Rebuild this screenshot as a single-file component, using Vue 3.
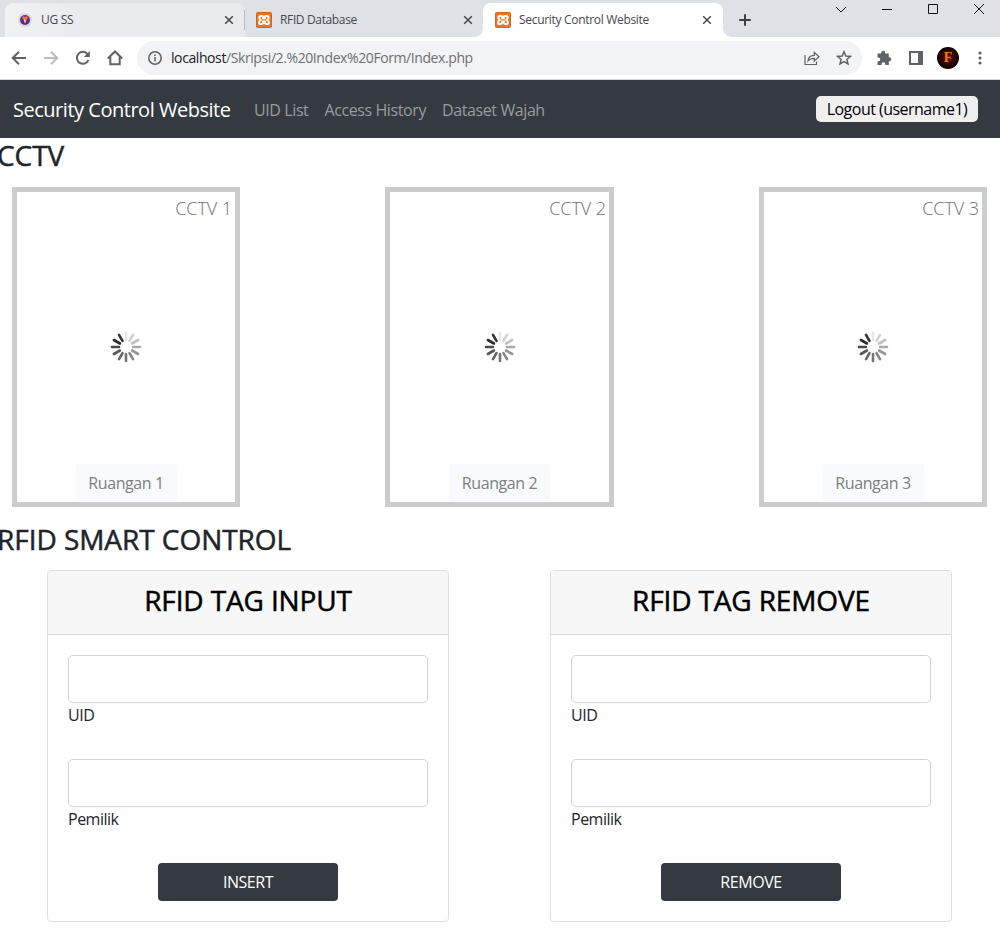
<script setup>
const tabs = [
  { title: 'UG SS', icon: 'seal', kind: 'first' },
  { title: 'RFID Database', icon: 'xampp', kind: 'second' },
  { title: 'Security Control Website', icon: 'xampp', kind: 'active' }
]
const links = ['UID List', 'Access History', 'Dataset Wajah']
const cameras = [1, 2, 3]
const shades = ['#e6e6e6', '#d2d2d2', '#c0c0c0', '#aaaaaa', '#969696', '#858585', '#757575', '#666666', '#585858', '#494949', '#2c2c2c', '#343434']
const forms = [
  { title: 'RFID TAG INPUT', action: 'INSERT' },
  { title: 'RFID TAG REMOVE', action: 'REMOVE' }
]
</script>

<template>
  <div class="window">
    <header class="strip">
      <div v-for="t in tabs" :key="t.title" class="tab" :class="t.kind">
        <svg v-if="t.icon === 'seal'" class="fav" viewBox="0 0 16 16">
          <circle cx="8" cy="8" r="6.6" fill="#dcd9e2" stroke="#cfccd6" stroke-dasharray="1 1" />
          <circle cx="8" cy="8" r="5" fill="#6b2a80" />
          <path d="M5 5.5 6.500 4 8 5 9.500 4 11 5.500 9.500 8h-3z" fill="#e5793a" />
          <path d="M7.200 7.500h1.600v3H7.200z" fill="#f3d9e0" />
          <path d="M4.500 9.500 7 11.500M11.500 9.500 9 11.500" stroke="#3b2a8c" />
        </svg>
        <svg v-else class="fav" viewBox="0 0 16 16">
          <rect x=".5" y=".5" width="15" height="15" rx="1" fill="#ee7422" stroke="#c96a2c" />
          <path d="M4.900 4H6C6.900 4 7.200 4.600 7.200 5.300V6.300H8.800V5.300C8.800 4.600 9.100 4 10 4H11.100C12.100 4 12.700 4.600 12.700 5.500 12.700 6.800 12 7.300 11.300 8 12.200 8.500 12.900 9.200 12.900 10.400 12.900 11.500 12.200 12 11.200 12H10.300C9.300 12 8.800 11.500 8.800 10.600V9.400H7.200V10.600C7.200 11.500 6.700 12 5.700 12H4.800C3.800 12 3.100 11.500 3.100 10.400 3.100 9.200 3.800 8.500 4.700 8 4 7.300 3.300 6.800 3.300 5.500 3.300 4.600 3.900 4 4.900 4Z" fill="none" stroke="#fff" stroke-width="2" />
        </svg>
        <span class="tab-title">{{ t.title }}</span>
        <svg class="close" viewBox="0 0 10 10"><path d="M1.200 1.200 8.800 8.800M8.800 1.200 1.200 8.800" /></svg>
      </div>
      <svg class="plus" viewBox="0 0 12 12"><path d="M6 .2V11.800M.2 6H11.800" /></svg>
      <div class="controls">
        <svg viewBox="0 0 12 12"><path d="M1 4 6 9 11 4" /></svg>
        <svg viewBox="0 0 12 12"><path d="M1 6.500H11" /></svg>
        <svg viewBox="0 0 12 12"><path d="M1.500 1.500H10.500V10.500H1.500Z" /></svg>
        <svg viewBox="0 0 12 12"><path d="M1 1 11 11M11 1 1 11" /></svg>
      </div>
    </header>

    <div class="toolbar">
      <svg class="ic back" viewBox="0 0 16 16"><path d="M15 8H2M8 1.700 1.700 8 8 14.300" /></svg>
      <svg class="ic forward" viewBox="0 0 16 16"><path d="M1 8H14M8 1.700 14.300 8 8 14.300" /></svg>
      <svg class="ic reload" viewBox="0 0 16 16"><path d="M13.400 10.200A6 6 0 1 1 12.500 4L14 5.500" /><path class="solid" d="M14.800 1V7H8.800Z" /></svg>
      <svg class="ic home" viewBox="0 0 16 16"><path d="M.8 8.500 8 1.500 15.200 8.500M3.300 7V14.300H12.700V7" /></svg>
      <div class="address">
        <svg class="ic info" viewBox="0 0 14 14"><circle cx="7" cy="7" r="6.200" /><path d="M7 6V10.500M7 3.500V5" /></svg>
        <span class="url"><b>localhost</b>/Skripsi/2.%20Index%20Form/Index.php</span>
        <svg class="ic share" viewBox="0 0 16 16"><path d="M1 5V14.500H12.500V11.500M4 11C4.300 7.300 6.500 5.300 10.300 5.300V2.300L15 6.700 10.300 11V8.300C7.500 8.300 5.500 9 4 11Z" /></svg>
        <svg class="ic star" viewBox="0 0 16 16"><path d="M8 1.800 9.800 6 14.400 6.400 10.900 9.400 12 13.900 8 11.500 4 13.900 5.100 9.400 1.600 6.400 6.200 6Z" /></svg>
      </div>
      <svg class="ic puzzle" viewBox="0 0 16 16"><path class="solid" d="M1.500 3.500H5.200V2.800a2 2 0 0 1 4 0V3.500H12.800V7.200H13.300a2 2 0 0 1 0 4H12.800V15H9.300V14.200a1.900 1.900 0 0 0-3.800 0V15H1.500V11.300H2.300a1.900 1.900 0 0 0 0-3.800H1.500Z" /></svg>
      <svg class="ic panel" viewBox="0 0 14 14"><path class="solid" fill-rule="evenodd" d="M0 0H14V14H0ZM2 2V12H9V2Z" /></svg>
      <div class="avatar"><span>F</span></div>
      <svg class="ic dots" viewBox="0 0 4 14"><circle cx="2" cy="2" r="1.600" /><circle cx="2" cy="7" r="1.600" /><circle cx="2" cy="12" r="1.600" /></svg>
    </div>

    <nav class="navbar">
      <span class="brand">Security Control Website</span>
      <a v-for="l in links" :key="l">{{ l }}</a>
      <button class="logout">Logout (username1)</button>
    </nav>

    <main>
      <h2 class="section cctv-title">CCTV</h2>
      <section class="cameras">
        <article v-for="n in cameras" :key="n" class="camera">
          <span class="cam-name">CCTV {{ n }}</span>
          <svg class="spinner" viewBox="-16 -16 32 32">
            <path v-for="(c, i) in shades" :key="i" d="M0-7V-14" :stroke="c" :transform="`rotate(${i * 30})`" />
          </svg>
          <span class="room">Ruangan {{ n }}</span>
        </article>
      </section>
      <h2 class="section">RFID SMART CONTROL</h2>
      <section class="forms">
        <form v-for="f in forms" :key="f.title" class="card" @submit.prevent>
          <h2 class="card-head">{{ f.title }}</h2>
          <div class="card-body">
            <input type="text"><label>UID</label>
            <input type="text"><label>Pemilik</label>
            <button class="submit">{{ f.action }}</button>
          </div>
        </form>
      </section>
    </main>
  </div>
</template>

<style>
body { background: #fff; overflow: hidden; }
</style>

<style scoped>
* { box-sizing: border-box; }
.window { width: 1000px; height: 946px; overflow: hidden; background: #fff; color: #212529; font: 400 16px/24px "Open Sans", "Noto Sans", sans-serif; }
svg { display: block; flex: none; }
.strip { height: 37px; background: #dee1e6; display: flex; padding: 3px 0 0 5px; }
.tab { width: 239px; height: 34px; padding: 0 11px 0 12px; display: flex; align-items: center; font-size: 12px; color: #45484c; border-radius: 8px 8px 0 0; position: relative; }
.first { width: 240px; background: linear-gradient(90deg, #f1f2f4, #e8eaed 35%, #e8eaed); }
.first::after { content: ""; position: absolute; right: 0; top: 7px; height: 20px; width: 1px; background: #b8bcc2; }
.second { width: 238px; padding: 0 10px 0 11px; }
.active { width: 240px; background: #fff; }
.active::before, .active::after { content: ""; position: absolute; bottom: 0; width: 8px; height: 8px; }
.active::before { left: -8px; background: radial-gradient(circle at 0 0, transparent 7.500px, #fff 8px); }
.active::after { right: -8px; background: radial-gradient(circle at 100% 0, transparent 7.500px, #fff 8px); }
.fav { width: 16px; height: 16px; margin-right: 8px; }
.tab-title { flex: 1; white-space: nowrap; letter-spacing: -.31px; }
.close { width: 10px; height: 10px; fill: none; stroke: #45484c; stroke-width: 1.500; }
.plus { width: 12px; height: 12px; margin: 11px 0 0 16px; fill: none; stroke: #3c4043; stroke-width: 2; }
.second .tab-title { letter-spacing: -.36px; }
.controls { margin-left: 84px; display: flex; gap: 34px; }
.controls svg { width: 12px; height: 12px; fill: none; stroke: #111; stroke-width: 1; }

.toolbar { height: 43px; border-bottom: 1px solid #d5d6d8; display: flex; align-items: center; padding: 0 17px 0 11px; }
.ic { width: 16px; height: 16px; fill: none; stroke: #5f6368; stroke-width: 2; }
.solid { fill: #5f6368; stroke: none; }
.forward { margin-left: 16px; stroke: #babcbe; }
.reload { margin-left: 16px; }
.home { margin-left: 16px; }
.address { margin-left: 14px; width: 725px; height: 34px; border-radius: 17px; background: #f1f3f4; display: flex; align-items: center; padding: 0 10px 0 11px; }
.info { width: 14px; height: 14px; stroke-width: 1.500; }
.url { flex: 1; margin-left: 9px; font-size: 14px; color: #6c6f73; letter-spacing: -.41px; white-space: nowrap; }
.url b { font-weight: 400; color: #202124; }
.share { stroke-width: 1.200; }
.star { margin-left: 16px; stroke-width: 1.500; }
.puzzle { margin-left: 14px; }
.panel { width: 14px; height: 14px; margin-left: 17px; }
.avatar { width: 22px; height: 22px; margin-left: 14px; border-radius: 50%; background: radial-gradient(circle, #701006, #180202 60%, #000); display: flex; align-items: center; justify-content: center; color: #f47b20; font: 700 14px/22px "Liberation Serif", serif; }
.dots { width: 4px; height: 14px; margin-left: 19px; fill: #5f6368; stroke: none; }

.navbar { height: 58px; background: #343a40; display: flex; align-items: center; padding: 2px 22px 0 13px; color: #999c9f; white-space: nowrap; }
.brand { width: 225px; font-size: 20px; color: #fff; letter-spacing: -.48px; }
.navbar a { margin-left: 16px; letter-spacing: -.4px; }
.logout { margin: -2px 0 0 auto; width: 162px; height: 26px; padding: 0; border: 0; border-radius: 5px; background: #efefef; color: #000; font: inherit; letter-spacing: -.52px; }

.section { margin: 0; height: 34px; font-size: 28px; line-height: 32px; font-weight: 500; letter-spacing: -.05px; margin-left: -3px; white-space: nowrap; -webkit-text-stroke: .5px currentColor; }
.cctv-title { margin-top: 1px; }
.cameras { margin: 14px 13px 16px 12px; display: flex; justify-content: space-between; }
.camera { width: 228px; height: 320px; border: 5px solid #ccc; display: flex; flex-direction: column; align-items: center; justify-content: space-between; color: #7d7f82; }
.camera:nth-child(2) { width: 229px; }
.cam-name { align-self: flex-end; margin: 3px 3px 0 0; height: 35px; font-size: 18px; font-weight: 300; line-height: 26px; letter-spacing: -.05px; color: #6d6f72; }
.spinner { width: 32px; height: 32px; fill: none; stroke-width: 2.600; stroke-linecap: round; }
.room { width: 101px; height: 38px; line-height: 39px; text-align: center; border-radius: 4px; background: #f9fafc; letter-spacing: -.42px; }
.forms { margin: 13px 48px 0 47px; display: flex; justify-content: space-between; }
.card { width: 402px; height: 352px; border: 1px solid #dfdfdf; border-radius: 4px; overflow: hidden; }
.card-head { margin: 0; height: 64px; border-bottom: 1px solid #d8d8d8; background: #f7f7f7; color: #000; font-size: 28px; line-height: 59px; font-weight: 500; letter-spacing: -.13px; text-align: center; -webkit-text-stroke: .5px currentColor; }
.card-body { padding: 20px; display: flex; flex-direction: column; }
input { width: 100%; height: 48px; border: 1px solid #ced4da; border-radius: 5px; outline: 0; padding: 0 12px; }
label { height: 56px; line-height: 25px; letter-spacing: -.5px; }
.submit { align-self: center; width: 180px; height: 38px; padding: 0; border: 0; border-radius: 4px; background: #343a40; color: #fff; font: inherit; letter-spacing: -.45px; }
</style>
